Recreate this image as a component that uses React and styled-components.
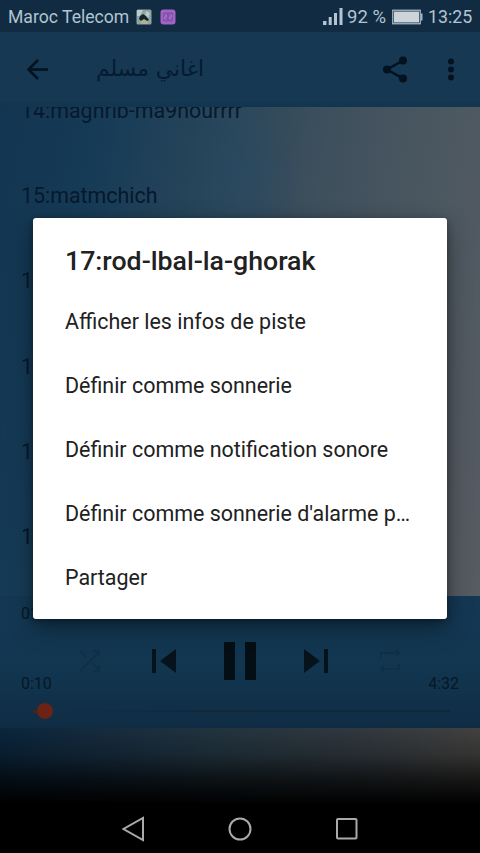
import React from "react";
import styled, { createGlobalStyle } from "styled-components";

const GlobalStyle = createGlobalStyle`
  * { box-sizing: border-box; }
  body { margin: 0; background: #000; font-family: Roboto, "Liberation Sans", sans-serif; }
  svg { display: block; flex: none; }
`;

const Screen = styled.div`
  position: relative;
  display: flex;
  flex-direction: column;
  width: 480px;
  height: 853px;
  overflow: hidden;
  background: #000;
`;

const StatusBar = styled.header`
  display: flex;
  align-items: center;
  height: 32px;
  flex: none;
  padding: 2px 8px 0;
  background: #112c42;
  color: #b3c4d2;
  font-size: 18px;
  line-height: 30px;
  white-space: nowrap;
`;

const Carrier = styled.span`
  width: 128px;
  font-size: 17.6px;
`;

const Percent = styled.span`
  width: 45px;
  margin-left: 4px;
  font-size: 18.5px;
`;

const Clock = styled.span`
  margin-left: 5px;
  font-size: 17.8px;
  width: 44px;
`;

const Push = styled.span`
  flex: 1;
`;

const AppBar = styled.div`
  display: flex;
  align-items: center;
  height: 75px;
  flex: none;
  padding: 0 17px 0 26px;
  background: linear-gradient(#163853, #163853 92%, #12354f);
`;

const AppTitle = styled.h1`
  flex: 1;
  margin: -2px 0 0 46px;
  color: #061a32;
  font-family: "DejaVu Sans", sans-serif;
  font-size: 21.8px;
  font-weight: 400;
  line-height: 40px;
`;

const TrackList = styled.main`
  height: 489px;
  flex: none;
  overflow: hidden;
  background:
    radial-gradient(ellipse 60px 90px at 240px 70px, rgba(35, 72, 104, 0.35), transparent),
    linear-gradient(100deg, #123551 0%, #163b57 18%, #274559 38%, #3f505d 60%, #4c5861 80%, #575b62 100%);
`;

const Track = styled.div`
  display: flex;
  align-items: center;
  height: 85.2px;
  padding: 0 21px;
  color: #07182d;
  font-size: 21.4px;

  &:first-child { margin-top: -39px; }
`;

const Player = styled.section`
  height: 132px;
  flex: none;
  padding: 7px 21px 0;
  background: linear-gradient(#143854 0%, #123650 55%, #0f2c44 100%);
  color: #061726;
  font-size: 16px;
`;

const NowPlaying = styled.div`
  height: 22px;
  line-height: 22px;
`;

const Controls = styled.div`
  display: flex;
  align-items: center;
  justify-content: space-between;
  height: 50px;
  padding: 0 57px;
  margin-top: 11px;
`;

const Times = styled.div`
  display: flex;
  justify-content: space-between;
  height: 20px;
  line-height: 20px;
  margin-top: -12px;
`;

const Seek = styled.div`
  display: flex;
  align-items: center;
  height: 20px;
  margin-top: 7px;
  padding: 0 9px 0 12px;
`;

const Played = styled.span`
  width: 4px;
  height: 3px;
  background: #4b211c;
`;

const Thumb = styled.span`
  width: 16px;
  height: 16px;
  border-radius: 50%;
  background: #6a2315;
`;

const Rail = styled.span`
  flex: 1;
  height: 2px;
  background: linear-gradient(90deg, #112f47, #0f293a 40%);
`;

const Wallpaper = styled.div`
  height: 76px;
  flex: none;
  background:
    linear-gradient(rgba(0, 0, 0, 0), rgba(0, 0, 0, 0.22) 35%, rgba(0, 0, 0, 0.66) 68%, #000),
    linear-gradient(90deg, #0a253c 0%, #152b3e 20%, #22343f 45%, #31383f 75%, #42423f 100%);
`;

const NavBar = styled.nav`
  display: flex;
  align-items: center;
  justify-content: space-between;
  height: 49px;
  flex: none;
  padding: 0 121px;
  background: #000;
`;

const Overlay = styled.div`
  position: absolute;
  left: 33px;
  top: 218px;
`;

const Dialog = styled.div`
  width: 414px;
  height: 401px;
  padding: 21px 32px 0;
  border-radius: 3px;
  background: #fff;
  color: #212121;
  box-shadow: 0 8px 24px rgba(0, 0, 0, 0.4), 0 2px 6px rgba(0, 0, 0, 0.3);
`;

const DialogTitle = styled.h2`
  margin: 0;
  height: 51px;
  font-size: 26.7px;
  font-weight: 500;
  line-height: 44px;
  white-space: nowrap;
`;

const Action = styled.div`
  height: 64px;
  line-height: 64px;
  font-size: 21.45px;
  white-space: nowrap;
`;

const Actions = styled.div`
  display: flex;
  flex-direction: column;
`;

const PhotoBadge = () => (
  <svg width="16" height="16" viewBox="0 0 16 16">
    <rect x=".5" y=".5" width="15" height="15" rx="1.5" fill="#8fa5a4" />
    <path d="M1 1h6l-3 6H1zM10 2l4 2-2 5-3-2z" fill="#bccbcb" />
    <path d="M4 7l3-2 3 2 3 4-2 1-3-2-3 2-2-2z" fill="#14282c" />
    <path d="M5 12l3-1.5 4 2v2.5H5z" fill="#b3af91" />
  </svg>
);

const PurpleBadge = () => (
  <svg width="16" height="16" viewBox="0 0 16 16">
    <rect x=".5" y=".5" width="15" height="15" rx="3" fill="#a163c4" />
    <rect x="3" y="3.5" width="10" height="9" rx="1" fill="#8450ad" />
    <path d="M4.5 6h2v2h-2v2h2M9.5 6h2v2h-2v2h2" fill="none" stroke="#ad7bcb" strokeWidth="1" />
  </svg>
);

const BadgeGroup = styled.span`
  display: flex;
  gap: 8px;
`;

const Signal = () => (
  <svg width="20" height="18" viewBox="0 0 20 18" fill="#b3c4d2">
    <rect x="0" y="13" width="3.5" height="4" />
    <rect x="5.7" y="9" width="3" height="8" />
    <rect x="11" y="5" width="3" height="12" />
    <rect x="16.5" y="0" width="3" height="17" />
  </svg>
);

const Battery = () => (
  <svg width="31" height="16" viewBox="0 0 31 16">
    <rect x=".75" y="1.25" width="27.5" height="13.5" fill="none" stroke="#a5b5c2" strokeWidth="1.3" />
    <rect x="2" y="2.5" width="25" height="11" fill="#ccd3d9" />
    <path d="M29 4.5h1.5v7H29z" fill="#a5b5c2" />
  </svg>
);

const Back = () => (
  <svg width="24" height="24" viewBox="0 0 24 24" fill="none" stroke="#03121f" strokeWidth="2.5">
    <path d="M22 11.5H3M12 2L2.5 11.5l9.5 9.5" />
  </svg>
);

const Share = () => (
  <svg width="26" height="28" viewBox="0 0 26 28" fill="#03121f">
    <path d="M21 4.5L5 13.5l16 9" fill="none" stroke="#03121f" strokeWidth="2.5" />
    <circle cx="21" cy="4.5" r="4" />
    <circle cx="5" cy="13.5" r="4" />
    <circle cx="21" cy="22.5" r="4" />
  </svg>
);

const MoreSlot = styled.span`
  margin-left: 39px;
  margin-right: 8px;
`;

const More = () => (
  <svg width="8" height="24" viewBox="0 0 8 24" fill="#03121f">
    <circle cx="4" cy="3.5" r="3" />
    <circle cx="4" cy="11.5" r="3" />
    <circle cx="4" cy="19.5" r="3" />
  </svg>
);

const Shuffle = () => (
  <svg width="24" height="24" viewBox="0 0 24 24" fill="none" stroke="#112f47" strokeWidth="1.8">
    <path d="M2 2l7 7M2 22L21 3M15 2h6v6M14 14l7 7M15 22h6v-6" />
  </svg>
);

const Previous = () => (
  <svg width="26" height="24" viewBox="0 0 26 24" fill="#06131c">
    <path d="M2 0h4v24H2zM26 0v24L10 12z" />
  </svg>
);

const Pause = () => (
  <svg width="32" height="38" viewBox="0 0 32 38" fill="#040e15">
    <path d="M0 0h11v38H0zM21 0h11v38H21z" />
  </svg>
);

const Next = () => (
  <svg width="26" height="24" viewBox="0 0 26 24" fill="#06131c">
    <path d="M0 0v24l16-12zM20 0h4v24h-4z" />
  </svg>
);

const Repeat = () => (
  <svg width="24" height="24" viewBox="0 0 24 24" fill="none" stroke="#112f47" strokeWidth="1.8">
    <path d="M3 9V4h18M18 1l3 3-3 3M21 15v5H3M6 17l-3 3 3 3" />
  </svg>
);

const NavBack = () => (
  <svg width="24" height="26" viewBox="0 0 24 26" fill="none" stroke="#aaa" strokeWidth="2">
    <path d="M22 2v22L2.5 13z" />
  </svg>
);

const NavHome = () => (
  <svg width="24" height="24" viewBox="0 0 24 24" fill="none" stroke="#aaa" strokeWidth="2">
    <circle cx="12" cy="12" r="10.5" />
  </svg>
);

const NavRecent = () => (
  <svg width="24" height="24" viewBox="0 0 24 24" fill="none" stroke="#aaa" strokeWidth="2">
    <rect x="2" y="2" width="19.5" height="19.5" rx="1" />
  </svg>
);

const tracks = ["14:maghrib-ma9hourrrr", "15:matmchich", "16", "17", "18", "19"];
const actions = [
  "Afficher les infos de piste",
  "Définir comme sonnerie",
  "Définir comme notification sonore",
  "Définir comme sonnerie d'alarme p…",
  "Partager",
];

export default function App() {
  return (
    <>
      <GlobalStyle />
      <Screen>
        <StatusBar>
          <Carrier>Maroc Telecom</Carrier>
          <BadgeGroup><PhotoBadge /><PurpleBadge /></BadgeGroup>
          <Push />
          <Signal />
          <Percent>92 %</Percent>
          <Battery />
          <Clock>13:25</Clock>
        </StatusBar>
        <AppBar>
          <Back />
          <AppTitle>اغاني مسلم</AppTitle>
          <Share />
          <MoreSlot><More /></MoreSlot>
        </AppBar>
        <TrackList>
          {tracks.map((name) => <Track key={name}>{name}</Track>)}
        </TrackList>
        <Player>
          <NowPlaying>01</NowPlaying>
          <Controls>
            <Shuffle /><Previous /><Pause /><Next /><Repeat />
          </Controls>
          <Times><span>0:10</span><span>4:32</span></Times>
          <Seek><Played /><Thumb /><Rail /></Seek>
        </Player>
        <Wallpaper />
        <NavBar><NavBack /><NavHome /><NavRecent /></NavBar>
        <Overlay>
          <Dialog>
            <DialogTitle>17:rod-lbal-la-ghorak</DialogTitle>
            <Actions>
              {actions.map((label) => <Action key={label}>{label}</Action>)}
            </Actions>
          </Dialog>
        </Overlay>
      </Screen>
    </>
  );
}
